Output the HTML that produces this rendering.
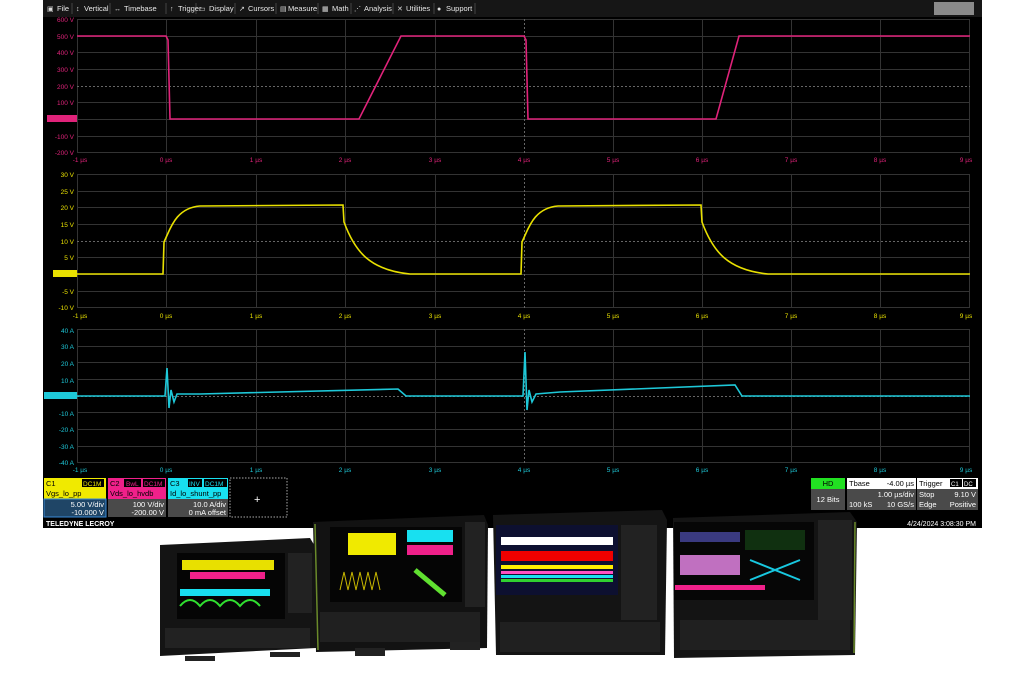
<!DOCTYPE html>
<html><head><meta charset="utf-8"><style>
body{margin:0;background:#fff;width:1024px;height:686px;overflow:hidden;font-family:"Liberation Sans",sans-serif}
svg text{font-family:"Liberation Sans",sans-serif}
</style></head><body>
<svg width="1024" height="686" xmlns="http://www.w3.org/2000/svg">
<rect x="43" y="0" width="939" height="528" fill="#000"/>
<!-- menu -->
<rect x="43" y="0" width="939" height="17" fill="#161616"/>
<g stroke="#444"><line x1="72" y1="3" x2="72" y2="14"/><line x1="110" y1="3" x2="110" y2="14"/><line x1="166" y1="3" x2="166" y2="14"/><line x1="196" y1="3" x2="196" y2="14"/><line x1="235" y1="3" x2="235" y2="14"/><line x1="276" y1="3" x2="276" y2="14"/><line x1="318" y1="3" x2="318" y2="14"/><line x1="351" y1="3" x2="351" y2="14"/><line x1="393" y1="3" x2="393" y2="14"/><line x1="434" y1="3" x2="434" y2="14"/><line x1="475" y1="3" x2="475" y2="14"/></g>
<g fill="#e8e8e8" font-size="7.5">
<text x="57" y="11">File</text><text x="84" y="11">Vertical</text><text x="124" y="11">Timebase</text>
<text x="178" y="11">Trigger</text><text x="209" y="11">Display</text><text x="248" y="11">Cursors</text>
<text x="288" y="11">Measure</text><text x="332" y="11">Math</text><text x="364" y="11">Analysis</text>
<text x="406" y="11">Utilities</text><text x="446" y="11">Support</text></g>
<g fill="#ddd" font-size="7"><text x="47" y="11">▣</text><text x="76" y="11">↕</text><text x="114" y="11">↔</text><text x="170" y="11">↑</text><text x="199" y="11">▭</text><text x="239" y="11">↗</text><text x="280" y="11">▤</text><text x="322" y="11">▦</text><text x="354" y="11">⋰</text><text x="397" y="11">✕</text><text x="437" y="11">●</text></g>
<rect x="934" y="2" width="40" height="13" fill="#8a8a8a"/>
<!-- grids -->
<g stroke="#333" stroke-width="1">
<g id="vg"><line x1="77.5" y1="19" x2="77.5" y2="153"/><line x1="166.5" y1="19" x2="166.5" y2="153"/><line x1="256.5" y1="19" x2="256.5" y2="153"/><line x1="345.5" y1="19" x2="345.5" y2="153"/><line x1="435.5" y1="19" x2="435.5" y2="153"/><line x1="613.5" y1="19" x2="613.5" y2="153"/><line x1="702.5" y1="19" x2="702.5" y2="153"/><line x1="791.5" y1="19" x2="791.5" y2="153"/><line x1="880.5" y1="19" x2="880.5" y2="153"/><line x1="969.5" y1="19" x2="969.5" y2="153"/></g>
<use href="#vg" y="155"/><use href="#vg" y="310"/>
<g id="hg"><line x1="77" y1="19.5" x2="970" y2="19.5"/><line x1="77" y1="36.5" x2="970" y2="36.5"/><line x1="77" y1="52.5" x2="970" y2="52.5"/><line x1="77" y1="69.5" x2="970" y2="69.5"/><line x1="77" y1="102.5" x2="970" y2="102.5"/><line x1="77" y1="119.5" x2="970" y2="119.5"/><line x1="77" y1="136.5" x2="970" y2="136.5"/><line x1="77" y1="152.5" x2="970" y2="152.5"/></g>
<use href="#hg" y="155"/><use href="#hg" y="310"/>
</g>
<g stroke="#666" stroke-dasharray="2,2">
<line x1="524.5" y1="19" x2="524.5" y2="153"/><line x1="524.5" y1="174" x2="524.5" y2="308"/><line x1="524.5" y1="329" x2="524.5" y2="463"/>
<line x1="77" y1="86.5" x2="970" y2="86.5"/><line x1="77" y1="241.5" x2="970" y2="241.5"/><line x1="77" y1="396.5" x2="970" y2="396.5"/>
</g>
<!-- axis labels -->
<g font-size="6.5" fill="#e0237a" text-anchor="end">
<text x="74" y="22">600 V</text><text x="74" y="39">500 V</text><text x="74" y="55">400 V</text><text x="74" y="72">300 V</text><text x="74" y="89">200 V</text><text x="74" y="105">100 V</text><text x="74" y="139">-100 V</text><text x="74" y="155">-200 V</text></g>
<g font-size="6.5" fill="#e0237a" text-anchor="middle"><text x="80" y="162">-1 µs</text><text x="166" y="162">0 µs</text><text x="256" y="162">1 µs</text><text x="345" y="162">2 µs</text><text x="435" y="162">3 µs</text><text x="524" y="162">4 µs</text><text x="613" y="162">5 µs</text><text x="702" y="162">6 µs</text><text x="791" y="162">7 µs</text><text x="880" y="162">8 µs</text><text x="966" y="162">9 µs</text></g>
<g font-size="6.5" fill="#e8e000" text-anchor="end">
<text x="74" y="177">30 V</text><text x="74" y="194">25 V</text><text x="74" y="210">20 V</text><text x="74" y="227">15 V</text><text x="74" y="244">10 V</text><text x="74" y="260">5 V</text><text x="74" y="294">-5 V</text><text x="74" y="310">-10 V</text></g>
<g font-size="6.5" fill="#e8e000" text-anchor="middle"><text x="80" y="318">-1 µs</text><text x="166" y="318">0 µs</text><text x="256" y="318">1 µs</text><text x="345" y="318">2 µs</text><text x="435" y="318">3 µs</text><text x="524" y="318">4 µs</text><text x="613" y="318">5 µs</text><text x="702" y="318">6 µs</text><text x="791" y="318">7 µs</text><text x="880" y="318">8 µs</text><text x="966" y="318">9 µs</text></g>
<g font-size="6.5" fill="#1ec8d8" text-anchor="end">
<text x="74" y="333">40 A</text><text x="74" y="349">30 A</text><text x="74" y="366">20 A</text><text x="74" y="383">10 A</text><text x="74" y="416">-10 A</text><text x="74" y="432">-20 A</text><text x="74" y="449">-30 A</text><text x="74" y="465">-40 A</text></g>
<g font-size="6.5" fill="#1ec8d8" text-anchor="middle"><text x="80" y="472">-1 µs</text><text x="166" y="472">0 µs</text><text x="256" y="472">1 µs</text><text x="345" y="472">2 µs</text><text x="435" y="472">3 µs</text><text x="524" y="472">4 µs</text><text x="613" y="472">5 µs</text><text x="702" y="472">6 µs</text><text x="791" y="472">7 µs</text><text x="880" y="472">8 µs</text><text x="966" y="472">9 µs</text></g>
<!-- tags -->
<rect x="47" y="115" width="30" height="7" fill="#e0237a"/><rect x="53" y="270" width="24" height="7" fill="#e8e000"/><rect x="44" y="392" width="33" height="7" fill="#1ec8d8"/>
<!-- waveforms -->
<path d="M77,36 L166,36 L168,40 L170,119 L359,119 L401,36 L524,36 L526,40 L528,119 L716,119 L739,36 L970,36" fill="none" stroke="#e0237a" stroke-width="1.6"/>
<path d="M77,274 L163,274 L164,242 C170,230 175,208 200,206 L343,205 L344,222 C355,252 370,270 410,274 L521,274 L522,242 C528,230 533,208 558,206 L701,205 L702,222 C713,252 728,270 768,274 L970,274" fill="none" stroke="#e8e000" stroke-width="1.6"/>
<path d="M77,396 L165,396 L167,368 L169,408 L171,390 L174,402 L177,394 L200,394 L398,389 L406,396 L523,396 L525,352 L527,410 L529,390 L532,402 L536,394 L560,392 L735,385 L742,396 L970,396" fill="none" stroke="#1ec8d8" stroke-width="1.6"/>
<!-- channel boxes -->
<rect x="44" y="478" width="62" height="21" fill="#f0ea00"/><rect x="44" y="499" width="62" height="18" fill="#1f4566" stroke="#3a8ad8"/>
<rect x="108" y="478" width="58" height="21" fill="#f0208a"/><rect x="108" y="499" width="58" height="18" fill="#4a4a4a"/>
<rect x="168" y="478" width="60" height="21" fill="#18e0f0"/><rect x="168" y="499" width="60" height="18" fill="#4a4a4a"/>
<rect x="230" y="478" width="57" height="39" fill="none" stroke="#aaa" stroke-dasharray="1.5,1.5"/>
<text x="254" y="503" fill="#fff" font-size="11">+</text>
<g font-size="7.5" fill="#000"><text x="46" y="486">C1</text><text x="46" y="496">Vgs_lo_pp</text><text x="110" y="486">C2</text><text x="110" y="496">Vds_lo_hvdb</text><text x="170" y="486">C3</text><text x="170" y="496">Id_lo_shunt_pp</text></g>
<rect x="82" y="479" width="22" height="8" fill="#000"/><text x="83" y="486" font-size="6.5" fill="#f0ea00">DC1M</text>
<rect x="124" y="479" width="17" height="8" fill="#000"/><rect x="143" y="479" width="22" height="8" fill="#000"/><text x="126" y="486" font-size="6.5" fill="#f0208a">BwL</text><text x="144" y="486" font-size="6.5" fill="#f0208a">DC1M</text>
<rect x="188" y="479" width="14" height="8" fill="#000"/><rect x="204" y="479" width="23" height="8" fill="#000"/><text x="189" y="486" font-size="6.5" fill="#18e0f0">INV</text><text x="205" y="486" font-size="6.5" fill="#18e0f0">DC1M</text>
<g font-size="7.5" fill="#fff" text-anchor="end"><text x="104" y="507">5.00 V/div</text><text x="104" y="515">-10.000 V</text><text x="164" y="507">100 V/div</text><text x="164" y="515">-200.00 V</text><text x="226" y="507">10.0 A/div</text><text x="226" y="515">0 mA offset</text></g>
<!-- right boxes -->
<rect x="811" y="478" width="34" height="11" fill="#22e022"/><rect x="811" y="489" width="34" height="21" fill="#4a4a4a"/>
<text x="828" y="486" font-size="7.5" text-anchor="middle" fill="#000">HD</text><text x="828" y="502" font-size="7.5" text-anchor="middle" fill="#fff">12 Bits</text>
<rect x="847" y="478" width="69" height="11" fill="#fff"/><rect x="847" y="489" width="69" height="21" fill="#4a4a4a"/>
<rect x="917" y="478" width="61" height="11" fill="#fff"/><rect x="917" y="489" width="61" height="21" fill="#4a4a4a"/>
<g font-size="7.5" fill="#000"><text x="849" y="486">Tbase</text><text x="914" y="486" text-anchor="end">-4.00 µs</text><text x="919" y="486">Trigger</text></g>
<rect x="950" y="479" width="12" height="8" fill="#000"/><rect x="963" y="479" width="13" height="8" fill="#000"/><text x="951" y="486" font-size="6" fill="#fff">C1</text><text x="964" y="486" font-size="6" fill="#fff">DC</text>
<g font-size="7.5" fill="#fff"><text x="914" y="497" text-anchor="end">1.00 µs/div</text><text x="849" y="507">100 kS</text><text x="914" y="507" text-anchor="end">10 GS/s</text><text x="919" y="497">Stop</text><text x="976" y="497" text-anchor="end">9.10 V</text><text x="919" y="507">Edge</text><text x="976" y="507" text-anchor="end">Positive</text></g>
<text x="46" y="526" font-size="7" font-weight="bold" fill="#fff">TELEDYNE LECROY</text>
<text x="976" y="526" font-size="7" fill="#fff" text-anchor="end">4/24/2024 3:08:30 PM</text>
<!-- products -->
<g>
<path d="M160,545 L310,538 L316,548 L316,648 L160,656 Z" fill="#141414"/>
<rect x="177" y="553" width="108" height="66" fill="#050505"/>
<rect x="182" y="560" width="92" height="10" fill="#e8e000"/><rect x="190" y="572" width="75" height="7" fill="#f0208a"/><rect x="180" y="589" width="90" height="7" fill="#18e0f0"/><path d="M180,606 q10,-12 20,0 q10,-12 20,0 q10,-12 20,0 q10,-12 20,0" stroke="#30e030" fill="none" stroke-width="2"/>
<rect x="288" y="553" width="24" height="60" fill="#222"/>
<rect x="165" y="628" width="145" height="20" fill="#222"/>
<rect x="185" y="656" width="30" height="5" fill="#222"/><rect x="270" y="652" width="30" height="5" fill="#222"/>
</g>
<g>
<path d="M313,522 L484,515 L488,525 L487,648 L316,652 Z" fill="#121212"/>
<line x1="315" y1="524" x2="318" y2="650" stroke="#6a8a2a" stroke-width="1.5"/>
<rect x="330" y="527" width="132" height="75" fill="#050505"/>
<rect x="348" y="533" width="48" height="22" fill="#f0ea00"/><rect x="407" y="530" width="46" height="12" fill="#18e0f0"/><rect x="407" y="545" width="46" height="10" fill="#f0208a"/>
<path d="M340,590 l4,-18 l4,18 l4,-18 l4,18 l4,-18 l4,18 l4,-18 l4,18 l4,-18 l4,18" stroke="#c8b800" fill="none"/><path d="M415,570 l30,25" stroke="#60e030" stroke-width="5"/>
<rect x="465" y="522" width="20" height="85" fill="#222"/>
<rect x="320" y="612" width="160" height="30" fill="#202020"/>
<rect x="355" y="648" width="30" height="8" fill="#222"/><rect x="450" y="642" width="30" height="8" fill="#222"/>
</g>
<g>
<path d="M493,515 L662,510 L667,520 L665,655 L496,655 Z" fill="#141414"/>
<rect x="496" y="525" width="122" height="70" fill="#0d1030"/>
<rect x="501" y="537" width="112" height="8" fill="#fff"/><rect x="501" y="551" width="112" height="10" fill="#f00000"/><rect x="501" y="565" width="112" height="4" fill="#ffee00"/><rect x="501" y="571" width="112" height="3" fill="#ff50c0"/><rect x="501" y="575" width="112" height="3" fill="#18e0f0"/><rect x="501" y="579" width="112" height="3" fill="#30d030"/>
<rect x="621" y="525" width="36" height="95" fill="#222"/>
<rect x="500" y="622" width="160" height="30" fill="#202020"/>
</g>
<g>
<path d="M673,518 L850,512 L857,522 L855,655 L674,658 Z" fill="#141414"/>
<line x1="855" y1="522" x2="854" y2="653" stroke="#6a8a2a" stroke-width="1.5"/>
<rect x="674" y="522" width="140" height="78" fill="#060606"/>
<rect x="680" y="532" width="60" height="10" fill="#3a3a80"/><rect x="680" y="555" width="60" height="20" fill="#c070c0"/><rect x="745" y="530" width="60" height="20" fill="#103010"/><path d="M750,560 L800,580 M750,580 L800,560" stroke="#18c8e0" stroke-width="2"/><rect x="675" y="585" width="90" height="5" fill="#f0208a"/>
<rect x="818" y="520" width="34" height="100" fill="#222"/>
<rect x="680" y="620" width="170" height="30" fill="#202020"/>
</g>
</svg>
</body></html>
